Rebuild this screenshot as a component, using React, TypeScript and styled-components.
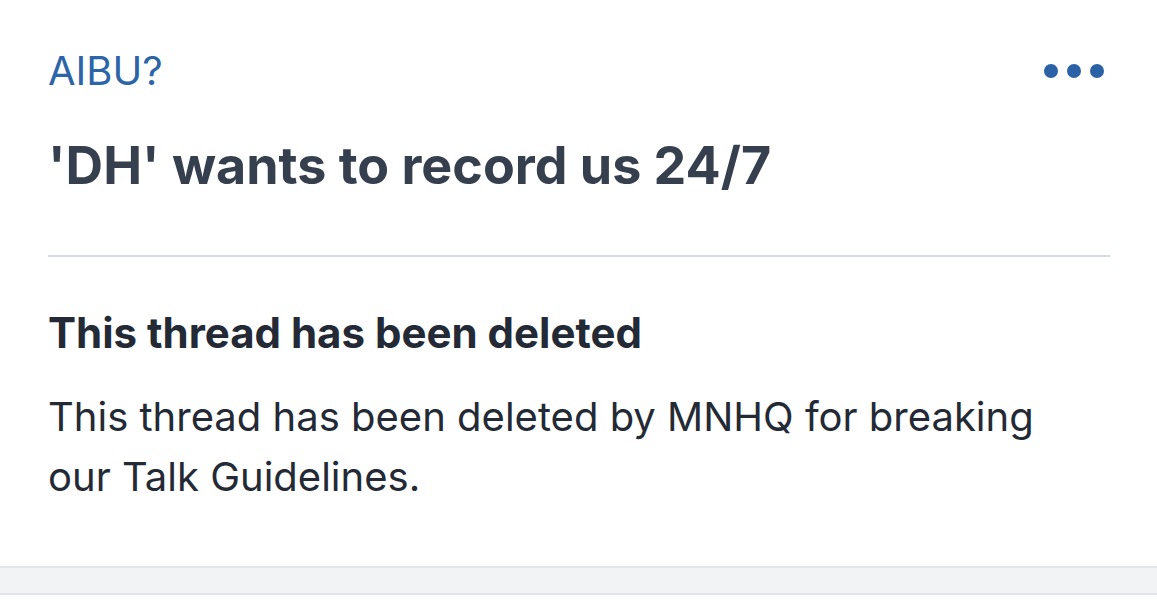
import styled, { createGlobalStyle } from 'styled-components';

const Global = createGlobalStyle`
  html, body {
    margin: 0;
    padding: 0;
    background: #ffffff;
  }
  body {
    font-family: Inter, "Noto Sans", sans-serif;
    -webkit-font-smoothing: antialiased;
  }
`

const Card = styled.article`
  background: #ffffff;
  padding: 46px 47px 0 48px;
  height: 566px;
  box-sizing: border-box;
`

const TopRow = styled.div`
  display: flex;
  align-items: center;
  justify-content: space-between;
`

const Topic = styled.a`
  color: #2b65a7;
  font-size: 40px;
  line-height: 50px;
  text-decoration: none;
`

const MoreButton = styled.button`
  display: flex;
  gap: 9px;
  padding: 0;
  margin-right: 6px;
  border: none;
  background: none;
`

const Dot = styled.span`
  width: 14px;
  height: 14px;
  border-radius: 50%;
  background: #2a62a5;
`

const Title = styled.h1`
  margin: 40px 0 0;
  font-size: 52px;
  line-height: 60px;
  font-weight: 700;
  color: #363f4e;
`

const Divider = styled.hr`
  margin: 59px 0 0;
  border: none;
  height: 2px;
  background: #d3dce6;
`

const Notice = styled.section`
  padding-top: 51px;
`

const NoticeTitle = styled.h2`
  margin: 0;
  font-size: 42px;
  line-height: 50px;
  font-weight: 700;
  color: #232a36;
`

const NoticeText = styled.p`
  margin: 29px 0 0;
  font-size: 40px;
  line-height: 60px;
  color: #232a36;
  max-width: 1010px;
`

const Footer = styled.div`
  height: 25px;
  background: #f2f3f5;
  border-top: 2px solid #e3e5e8;
  border-bottom: 2px solid #e3e5e8;
`

export default function App() {
  return (
    <>
      <Global />
      <Card>
        <TopRow>
          <Topic href="#">AIBU?</Topic>
          <MoreButton aria-label="More">
            <Dot />
            <Dot />
            <Dot />
          </MoreButton>
        </TopRow>
        <Title>'DH' wants to record us 24/7</Title>
        <Divider />
        <Notice>
          <NoticeTitle>This thread has been deleted</NoticeTitle>
          <NoticeText>
            This thread has been deleted by MNHQ for breaking our Talk Guidelines.
          </NoticeText>
        </Notice>
      </Card>
      <Footer />
    </>
  )
}
